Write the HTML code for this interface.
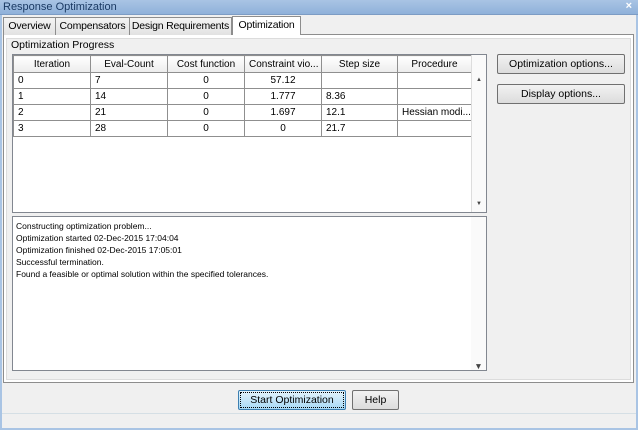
<!DOCTYPE html><html><head><style>
*{box-sizing:border-box;margin:0;padding:0}
body{width:638px;height:430px;background:#f0f0f0;font-family:"Liberation Sans",sans-serif;font-size:11px;color:#000;position:relative;overflow:hidden}
.a{position:absolute}
.title{left:0;top:0;width:638px;height:15px;background:linear-gradient(#a9c4e4,#8fb1da);color:#1b3a63;font-size:11px;padding:1px 3px;border-bottom:1px solid #7d9cc4}
.frame{left:0;top:15px;width:638px;height:415px;border:2px solid #a9c4e4;border-top:none}
.tab{top:17px;height:18px;border:1px solid #8d8d8d;border-bottom:none;background:linear-gradient(#f4f4f4,#e2e2e2);padding:2px 0;font-size:10.5px;white-space:nowrap;text-align:center;letter-spacing:-0.2px}
.panel{left:3px;top:34px;width:631px;height:349px;border:1px solid #8d8d8d;background:#fff}
.inner{left:6px;top:38px;width:625px;height:342px;background:#f0f0f0;border:1px solid #dcdcdc}
table{border-collapse:collapse;font-size:10px}
td,th{border:1px solid #8f8f8f;height:16px;padding:0 4px;font-weight:normal;white-space:nowrap;overflow:hidden}
th{background:linear-gradient(#fff,#ececec);text-align:center;height:17px}
.btn{border:1px solid #707070;border-radius:2px;background:linear-gradient(#f2f2f2,#dcdcdc);text-align:center;font-size:10.5px;line-height:18px}
.log div{height:12px;font-size:8.5px;line-height:12px}
</style></head><body>
<div class="a frame"></div>
<div class="a title">Response Optimization<span style="position:absolute;right:6px;top:0;color:#fff;font-weight:bold">×</span></div>
<div class="a panel"></div>
<div class="a inner"></div>
<div class="a tab" style="left:3px;width:53px">Overview</div>
<div class="a tab" style="left:55px;width:75px">Compensators</div>
<div class="a tab" style="left:129px;width:103px">Design Requirements</div>
<div class="a tab" style="left:232px;top:16px;height:19px;width:69px;background:#fff;padding-top:2px">Optimization</div>
<div class="a" style="left:11px;top:39px;font-size:10.5px">Optimization Progress</div>
<div class="a" style="left:12px;top:54px;width:475px;height:159px;border:1px solid #828790;background:#fff">
<table style="width:459px;table-layout:fixed">
<tr><th style="width:77px">Iteration</th><th style="width:77px">Eval-Count</th><th style="width:77px">Cost function</th><th style="width:77px">Constraint vio...</th><th style="width:76px">Step size</th><th>Procedure</th></tr>
<tr><td>0</td><td>7</td><td style="text-align:center">0</td><td style="text-align:center">57.12</td><td></td><td></td></tr>
<tr><td>1</td><td>14</td><td style="text-align:center">0</td><td style="text-align:center">1.777</td><td>8.36</td><td></td></tr>
<tr><td>2</td><td>21</td><td style="text-align:center">0</td><td style="text-align:center">1.697</td><td>12.1</td><td>Hessian modi...</td></tr>
<tr><td>3</td><td>28</td><td style="text-align:center">0</td><td style="text-align:center">0</td><td>21.7</td><td></td></tr>
</table>
<div class="a" style="right:0;top:0;width:15px;height:157px;border-left:1px solid #ddd;background:#fafafa;font-size:6px;color:#444;text-align:center"><div style="margin-top:22px">▲</div><div style="margin-top:118px">▼</div></div>
</div>
<div class="a log" style="left:12px;top:216px;width:475px;height:155px;border:1px solid #828790;background:#fff;padding:3px 3px">
<div>Constructing optimization problem...</div>
<div>Optimization started 02-Dec-2015 17:04:04</div>
<div>Optimization finished 02-Dec-2015 17:05:01</div>
<div>Successful termination.</div>
<div>Found a feasible or optimal solution within the specified tolerances.</div>
<div class="a" style="right:0;top:0;width:15px;height:153px;background:#fafafa;font-size:6px;color:#444;text-align:center"><div style="margin-top:143px">▼</div></div>
</div>
<div class="a btn" style="left:497px;top:54px;width:128px;height:20px">Optimization options...</div>
<div class="a btn" style="left:497px;top:84px;width:128px;height:20px">Display options...</div>
<div class="a btn" style="left:238px;top:390px;width:108px;height:20px;border-color:#3c7fb1;background:linear-gradient(#e5f4fc,#a7d9f5);outline:1px dotted #000;outline-offset:-3px">Start Optimization</div>
<div class="a btn" style="left:352px;top:390px;width:47px;height:20px">Help</div>
<div class="a" style="left:2px;top:413px;width:634px;height:1px;background:#d5dfe5"></div>
</body></html>
